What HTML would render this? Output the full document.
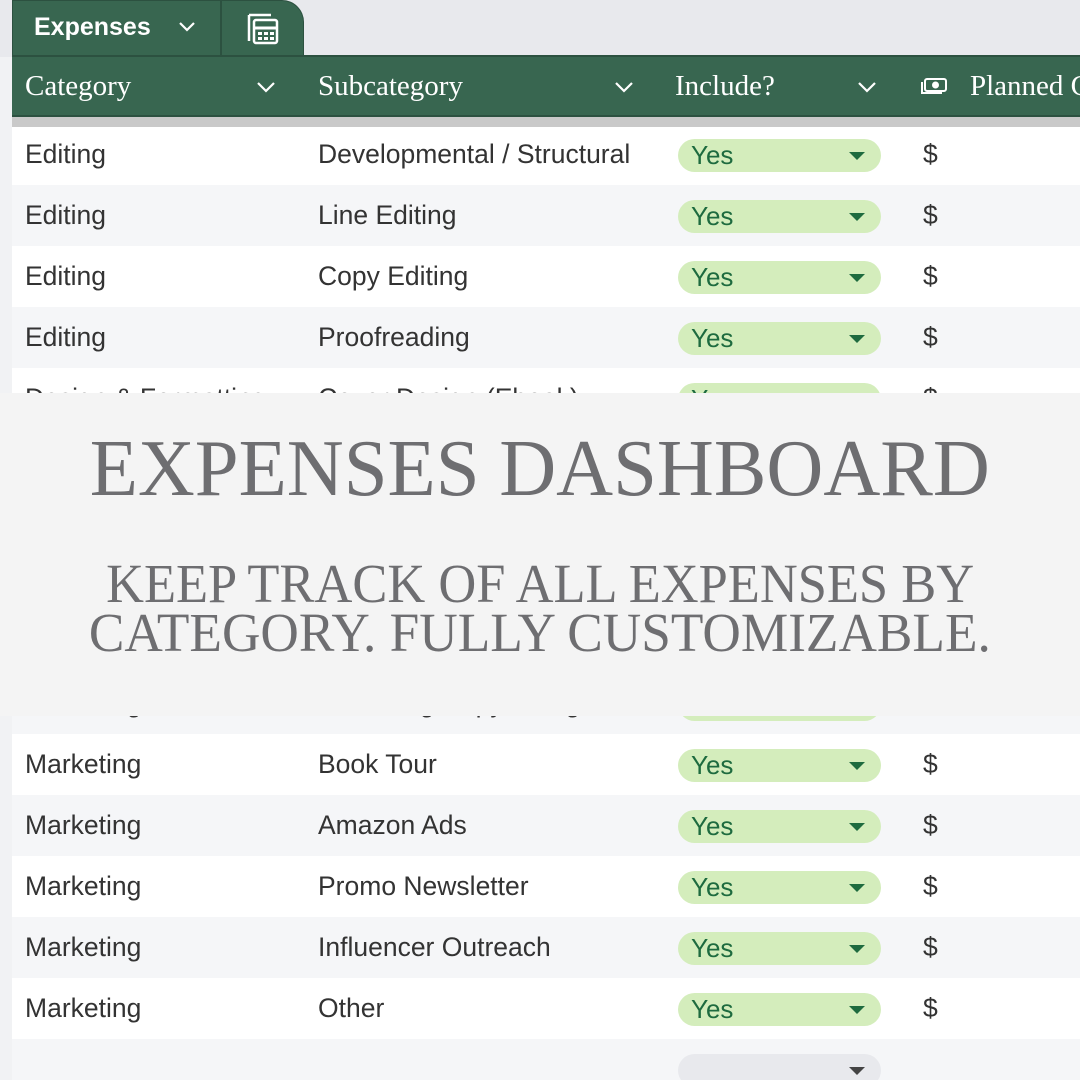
<!DOCTYPE html>
<html><head><meta charset="utf-8"><style>
*{margin:0;padding:0;box-sizing:border-box}
html,body{width:1080px;height:1080px;overflow:hidden}
body{background:#f1f2f4;position:relative;font-family:"Liberation Sans",sans-serif}
.top{position:absolute;left:0;top:0;width:1080px;height:57px;background:#e8e9ed}
.tab{position:absolute;left:12px;top:0;width:292px;height:58px;background:#386650;border-top-right-radius:22px;border:1px solid #2c5140;border-bottom:none}
.tab .div{position:absolute;left:207px;top:0;width:2px;height:57px;background:#2c5140}
.tab .t{position:absolute;left:21px;top:12px;color:#fff;font-size:25px;font-weight:bold}
.hdr{position:absolute;left:12px;top:55px;width:1068px;height:63px;background:#386650;border-top:2px solid #2c5140;border-bottom:3px solid #2c5140;overflow:hidden}
.hdr span{position:absolute;top:13px;color:#fff;font-family:"Liberation Serif",serif;font-size:29px;white-space:nowrap}
.stripe{position:absolute;left:12px;top:117px;width:1068px;height:10px;background:#c9c9c9}
.row{position:absolute;left:12px;width:1068px;height:61px;background:#fff}
.row.g{background:#f5f6f8}
.row span{position:absolute;font-size:26.5px;color:#333;white-space:nowrap}
.pill{position:absolute;left:666px;width:203px;height:33px;border-radius:17px;background:#d4edbc}
.pill b{position:absolute;left:13px;top:1px;font-weight:normal;color:#1e6b3f;font-size:26px}
.pill i{position:absolute;right:16px;top:13px;border-left:8px solid transparent;border-right:8px solid transparent;border-top:8px solid #1e6b3f}
.pill.e{background:#e8e9ed}.pill.e i{border-top-color:#444}
.ov{position:absolute;left:0;top:393px;width:1080px;height:323px;background:#f4f4f4}
.ttl{position:absolute;left:0;width:1080px;text-align:center;color:#6e6e71;font-family:"Liberation Serif",serif;white-space:nowrap}
.ttl div{display:inline-block;transform-origin:center center}
</style></head><body>
<div class="top"></div>
<div class="tab"><div class="t">Expenses</div>
<svg style="position:absolute;left:165px;top:20px" width="18" height="12" viewBox="0 0 18 12"><path d="M2 2l7 7 7-7" stroke="#fff" stroke-width="2.2" fill="none"/></svg>
<div class="div"></div>
<svg style="position:absolute;left:233px;top:11px" width="34" height="34" viewBox="0 0 34 34" fill="none" stroke="#fff" stroke-width="2.5"><path d="M3 3v26"/><path d="M3 3h22"/><rect x="8" y="8" width="23" height="23" rx="2"/><path d="M8 16h23" stroke-width="3"/><g fill="#fff" stroke="none"><rect x="12" y="20" width="4" height="3"/><rect x="18" y="20" width="4" height="3"/><rect x="24" y="20" width="4" height="3"/><rect x="12" y="25" width="4" height="3"/><rect x="18" y="25" width="4" height="3"/><rect x="24" y="25" width="4" height="3"/></g></svg>
</div>
<div class="hdr">
<span style="left:13px">Category</span>
<span style="left:306px">Subcategory</span>
<span style="left:663px">Include?</span>
<span style="left:958px">Planned Cost</span>
<svg style="position:absolute;left:244px;top:24px" width="20" height="13" viewBox="0 0 20 13"><path d="M2 2l8 8 8-8" stroke="#fff" stroke-width="2.2" fill="none"/></svg>
<svg style="position:absolute;left:602px;top:24px" width="20" height="13" viewBox="0 0 20 13"><path d="M2 2l8 8 8-8" stroke="#fff" stroke-width="2.2" fill="none"/></svg>
<svg style="position:absolute;left:845px;top:24px" width="20" height="13" viewBox="0 0 20 13"><path d="M2 2l8 8 8-8" stroke="#fff" stroke-width="2.2" fill="none"/></svg>
<svg style="position:absolute;left:908px;top:19px" width="28" height="20" viewBox="0 0 28 20" fill="none" stroke="#fff" stroke-width="2"><rect x="5" y="3" width="21" height="12" rx="2"/><circle cx="15.5" cy="9" r="2.5" fill="#fff"/><path d="M2 6v11h20"/></svg>
</div>
<div class="stripe"></div>
<div id="rows"></div>
<div class="ov">
<div class="ttl" style="top:26px;font-size:80px;line-height:100px"><div id="t1">EXPENSES DASHBOARD</div></div>
<div class="ttl" style="top:166px;font-size:55px;line-height:50px"><div id="t2">KEEP TRACK OF ALL EXPENSES BY</div></div>
<div class="ttl" style="top:215px;font-size:55px;line-height:50px"><div id="t3">CATEGORY. FULLY CUSTOMIZABLE.</div></div>
</div>
<script>
var d=[["Editing","Developmental / Structural"],["Editing","Line Editing"],["Editing","Copy Editing"],["Editing","Proofreading"],["Design & Formatting","Cover Design (Ebook)"],["Design & Formatting","Cover Design (Print)"],["Design & Formatting","Interior Formatting"],["Marketing","ARC Copies"],["Marketing","Bookstagram"],["Marketing","Marketing Copywriting"],["Marketing","Book Tour"],["Marketing","Amazon Ads"],["Marketing","Promo Newsletter"],["Marketing","Influencer Outreach"],["Marketing","Other"],["",""]];
var h="";d.forEach(function(r,i){var t=i==0?127:124+i*61;var hh=i==0?58:61;var ty=i==0?12:15;var py=i==0?12:15;
h+='<div class="row'+(i%2?' g':'')+'" style="top:'+t+'px;height:'+hh+'px"><span style="left:13px;top:'+ty+'px">'+r[0].replace("&","&amp;")+'</span><span style="left:306px;top:'+ty+'px">'+r[1]+'</span>'+
(r[0]?'<div class="pill" style="top:'+py+'px"><b>Yes</b><i></i></div><span style="left:911px;top:'+ty+'px">$</span>':'<div class="pill e" style="top:'+py+'px"><i></i></div>')+'</div>';});
document.getElementById("rows").innerHTML=h;
[["t1",900],["t2",868],["t3",902]].forEach(function(a){var e=document.getElementById(a[0]);var w=e.getBoundingClientRect().width;e.style.transform="scaleX("+(a[1]/w)+")";});
</script>
</body></html>
